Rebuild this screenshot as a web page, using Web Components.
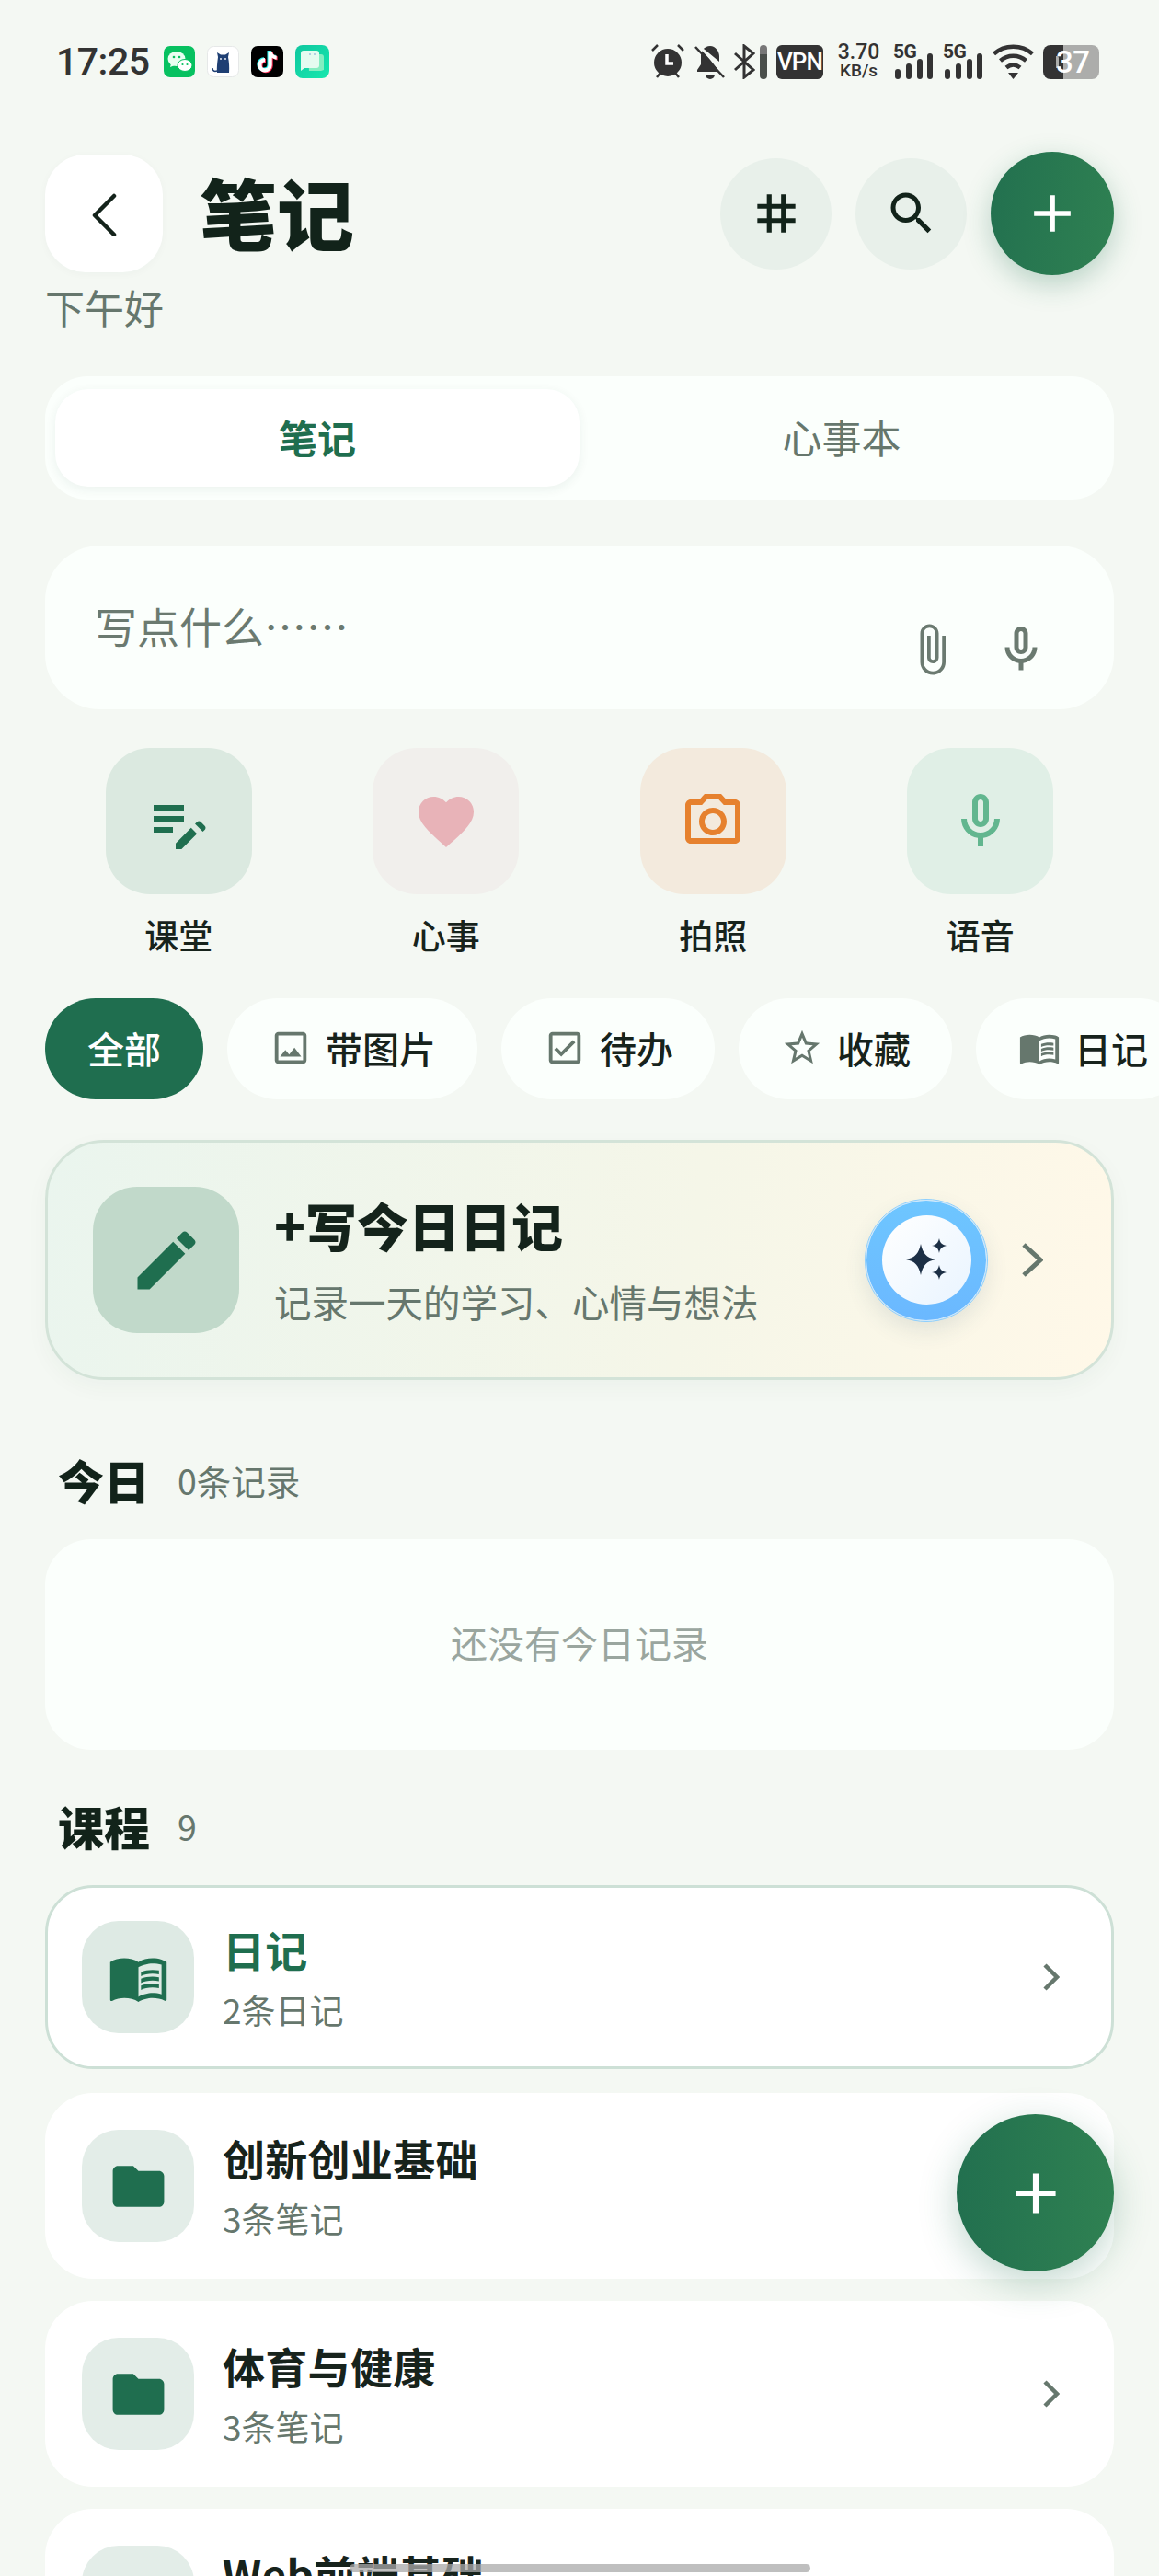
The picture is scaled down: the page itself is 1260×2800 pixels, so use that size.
<!DOCTYPE html>
<html lang="zh">
<head>
<meta charset="utf-8">
<title>笔记</title>
<style>
html, body { margin: 0; height: 2800px; overflow: hidden; background: #f4f8f3; }
body { font-family: "Noto Sans CJK SC", "Noto Sans", sans-serif; color: #14231b; }
</style>
</head>
<body>
<notes-page>
    <status-bar></status-bar>
    <page-header></page-header>
    <seg-tabs></seg-tabs>
    <compose-box></compose-box>
    <quick-grid>
        <quick-action icon="editNote" bg="#dbe9e0" color="#1f6e4f">课堂</quick-action>
        <quick-action icon="heart" bg="#f1efec" color="#e8b3b8">心事</quick-action>
        <quick-action icon="camera" bg="#f3eadd" color="#e6812e">拍照</quick-action>
        <quick-action icon="mic" bg="#e0efe6" color="#62b68f">语音</quick-action>
    </quick-grid>
    <filter-row>
        <filter-chip active>全部</filter-chip>
        <filter-chip icon="image">带图片</filter-chip>
        <filter-chip icon="checkBox">待办</filter-chip>
        <filter-chip icon="star">收藏</filter-chip>
        <filter-chip icon="book">日记</filter-chip>
    </filter-row>
    <diary-banner></diary-banner>
    <section-head style="margin-top:81px" note="0条记录">今日</section-head>
    <empty-card>还没有今日记录</empty-card>
    <section-head style="margin-top:55px" note="9">课程</section-head>
    <course-list>
        <course-row icon="book" selected sub="2条日记">日记</course-row>
        <course-row icon="folder" sub="3条笔记">创新创业基础</course-row>
        <course-row icon="folder" sub="3条笔记">体育与健康</course-row>
        <course-row icon="folder" sub="3条笔记">Web前端基础</course-row>
    </course-list>
    <fab-button></fab-button>
    <home-bar></home-bar>
</notes-page>

<script>
// material style paths, all on a 24 box
const ICONS = {
    editNote: "M3,10h11v2H3V10z M3,8h11V6H3V8z M3,16h7v-2H3V16z M18.01,12.87l0.71-0.71c0.39-0.39,1.02-0.39,1.41,0l1.41,1.41c0.39,0.39,0.39,1.02,0,1.41l-0.71,0.71L18.01,12.87z M16.59,14.29L11,19.88V22h2.12l5.59-5.59L16.59,14.29z",
    heart: "M12 21.35l-1.45-1.32C5.4 15.36 2 12.28 2 8.5 2 5.42 4.42 3 7.5 3c1.74 0 3.41.81 4.5 2.09C13.09 3.81 14.76 3 16.5 3 19.58 3 22 5.42 22 8.5c0 3.78-3.4 6.86-8.55 11.54L12 21.35z",
    camera: "M14.12 4l1.83 2H20v12H4V6h4.05l1.83-2h4.24M15 2H9L7.17 4H4c-1.1 0-2 .9-2 2v12c0 1.1.9 2 2 2h16c1.1 0 2-.9 2-2V6c0-1.1-.9-2-2-2h-3.17L15 2zm-3 7c1.65 0 3 1.35 3 3s-1.35 3-3 3-3-1.35-3-3 1.35-3 3-3m0-2c-2.76 0-5 2.24-5 5s2.24 5 5 5 5-2.24 5-5-2.24-5-5-5z",
    mic: "M12 14c1.66 0 3-1.34 3-3V5c0-1.66-1.34-3-3-3S9 3.34 9 5v6c0 1.66 1.34 3 3 3zm-1-9c0-.55.45-1 1-1s1 .45 1 1v6c0 .55-.45 1-1 1s-1-.45-1-1V5zm6 6c0 2.76-2.24 5-5 5s-5-2.24-5-5H5c0 3.53 2.61 6.43 6 6.92V21h2v-3.08c3.39-.49 6-3.39 6-6.92h-2z",
    clip: "M16.5 6v11.5c0 2.21-1.79 4-4 4s-4-1.79-4-4V5c0-1.38 1.12-2.5 2.5-2.5s2.5 1.12 2.5 2.5v10.5c0 .55-.45 1-1 1s-1-.45-1-1V6H10v9.5c0 1.38 1.12 2.5 2.5 2.5s2.5-1.12 2.5-2.5V5c0-2.21-1.79-4-4-4S7 2.79 7 5v12.5c0 3.04 2.46 5.5 5.5 5.5s5.5-2.46 5.5-5.5V6h-1.5z",
    tag: "M20 10V8h-4V4h-2v4h-4V4H8v4H4v2h4v4H4v2h4v4h2v-4h4v4h2v-4h4v-2h-4v-4h4zm-6 4h-4v-4h4v4z",
    search: "M15.5 14h-.79l-.28-.27C15.41 12.59 16 11.11 16 9.5 16 5.91 13.09 3 9.5 3S3 5.91 3 9.5 5.91 16 9.5 16c1.61 0 3.09-.59 4.23-1.57l.27.28v.79l5 4.99L20.49 19l-4.99-5zm-6 0C7.01 14 5 11.99 5 9.5S7.01 5 9.5 5 14 7.01 14 9.5 11.99 14 9.5 14z",
    add: "M19 13h-6v6h-2v-6H5v-2h6V5h2v6h6v2z",
    image: "M19 5v14H5V5h14m0-2H5c-1.1 0-2 .9-2 2v14c0 1.1.9 2 2 2h14c1.1 0 2-.9 2-2V5c0-1.1-.9-2-2-2zm-4.86 8.86l-3 3.87L9 13.14 6 17h12l-3.86-5.14z",
    checkBox: "M19 3H5c-1.1 0-2 .9-2 2v14c0 1.1.9 2 2 2h14c1.1 0 2-.9 2-2V5c0-1.1-.9-2-2-2zm0 16H5V5h14v14zM17.99 9l-1.41-1.42-6.59 6.59-2.58-2.57-1.42 1.41 4 3.99z",
    star: "M22 9.24l-7.19-.62L12 2 9.19 8.63 2 9.24l5.46 4.73L5.82 21 12 17.27 18.18 21l-1.63-7.03L22 9.24zM12 15.4l-3.76 2.27 1-4.28-3.32-2.88 4.38-.38L12 6.1l1.71 4.04 4.38.38-3.32 2.88 1 4.28L12 15.4z",
    book: "M21,5c-1.11-0.35-2.33-0.5-3.5-0.5c-1.95,0-4.05,0.4-5.5,1.5c-1.45-1.1-3.55-1.5-5.5-1.5S2.45,4.9,1,6v14.65c0,0.25,0.25,0.5,0.5,0.5c0.1,0,0.15-0.05,0.25-0.05C3.1,20.45,5.05,20,6.5,20c1.95,0,4.05,0.4,5.5,1.5c1.35-0.85,3.8-1.5,5.5-1.5c1.65,0,3.35,0.3,4.75,1.05c0.1,0.05,0.15,0.05,0.25,0.05c0.25,0,0.5-0.25,0.5-0.5V6C22.4,5.55,21.75,5.25,21,5z M21,18.5c-1.1-0.35-2.3-0.5-3.5-0.5c-1.7,0-4.15,0.65-5.5,1.5V8c1.35-0.85,3.8-1.5,5.5-1.5c1.2,0,2.4,0.15,3.5,0.5V18.5z M17.5,10.5c0.88,0,1.73,0.09,2.5,0.26V9.24C19.21,9.09,18.36,9,17.5,9c-1.7,0-3.24,0.29-4.5,0.83v1.66C14.13,10.85,15.7,10.5,17.5,10.5z M13,12.49v1.66c1.13-0.64,2.7-0.99,4.5-0.99c0.88,0,1.73,0.09,2.5,0.26V11.9c-0.79-0.15-1.64-0.24-2.5-0.24C15.8,11.66,14.26,11.96,13,12.49z M17.5,14.33c-1.7,0-3.24,0.29-4.5,0.83v1.66c1.13-0.64,2.7-0.99,4.5-0.99c0.88,0,1.73,0.09,2.5,0.26v-1.52C19.21,14.41,18.36,14.33,17.5,14.33z",
    folder: "M10 4H4c-1.1 0-1.99.9-1.99 2L2 18c0 1.1.9 2 2 2h16c1.1 0 2-.9 2-2V8c0-1.1-.9-2-2-2h-8l-2-2z",
    edit: "M3 17.25V21h3.75L17.81 9.94l-3.75-3.75L3 17.25zM20.71 7.04c.39-.39.39-1.02 0-1.41l-2.34-2.34c-.39-.39-1.02-.39-1.41 0l-1.83 1.83 3.75 3.75 1.83-1.83z"
};

function icon(name, size, color) {
    return `<svg width="${size}" height="${size}" viewBox="0 0 24 24" fill="${color}" style="display:block;flex:none"><path d="${ICONS[name]}"/></svg>`;
}

function chevron(width, height, color, stroke) {
    return `<svg width="${width}" height="${height}" viewBox="0 0 ${width} ${height}" fill="none" style="display:block;flex:none"><path d="M2 2L${width - 3} ${height / 2}L2 ${height - 2}" stroke="${color}" stroke-width="${stroke}"/></svg>`;
}

class BaseElement extends HTMLElement {
    connectedCallback() {
        if (this.shadowRoot) return;
        this.attachShadow({ mode: "open" });
        this.shadowRoot.innerHTML = this.render();
    }
}

class NotesPage extends BaseElement {
    render() {
        return `<style>
            :host { display: block; position: relative; width: 1260px; height: 2800px; overflow: hidden; box-sizing: border-box; padding: 0 49px; }
        </style><slot></slot>`;
    }
}

class StatusBar extends BaseElement {
    signal() {
        return `<span class="sig"><b>5G</b><svg width="44" height="28" viewBox="0 0 44 28"><rect x="2" y="17" width="6" height="11" rx="3" fill="#333"/><rect x="14" y="11" width="6" height="17" rx="3" fill="#333"/><rect x="26" y="6" width="6" height="22" rx="3" fill="#333"/><rect x="37" y="0" width="6" height="28" rx="3" fill="#333"/></svg></span>`;
    }
    render() {
        return `<style>
            :host { display: flex; justify-content: space-between; align-items: flex-start; box-sizing: border-box; height: 165px; margin: 0 -49px; padding: 48px 62px 0 61px; font-family: Roboto, sans-serif; color: #333; }
            .left, .right { display: flex; align-items: center; height: 38px; }
            .time { font-size: 41px; font-weight: 500; line-height: 38px; width: 117px; letter-spacing: -.5px; }
            .left svg { margin-right: 13px; display: block; }
            .right { gap: 0; }
            .vpn { box-sizing: border-box; width: 51px; height: 37px; background: #333; color: #fff; border-radius: 6px; font-size: 26px; font-weight: 500; line-height: 37px; text-align: center; letter-spacing: -1px; margin: 0 15px 0 10px; }
            .speed { width: 47px; text-align: center; font-weight: 500; margin-right: 14px; display: flex; flex-direction: column; align-items: center; }
            .speed b { font-size: 23px; line-height: 20px; font-weight: 500; }
            .speed i { font-style: normal; font-size: 19px; line-height: 20px; }
            .sig { position: relative; display: block; width: 44px; height: 38px; margin-right: 10px; }
            .sig b { position: absolute; left: 0; top: -2px; font-size: 21px; line-height: 20px; font-weight: 700; letter-spacing: -.5px; }
            .sig svg { position: absolute; left: 0; bottom: 0; display: block; }
            .pill { width: 8px; height: 37px; border-radius: 4px; background: linear-gradient(#777 0 26%, #4a4f4b 26%); margin-left: 5px; }
            .batt { position: relative; display: block; width: 64px; height: 37px; margin-left: 10px; }
            .batt .track { position: absolute; left: 0; top: 0; width: 61px; height: 37px; border-radius: 8px; background: linear-gradient(90deg, #333 0 36%, #acadab 36%); }
            .batt .nub { position: absolute; right: 0; top: 12px; width: 3px; height: 13px; border-radius: 0 2px 2px 0; background: #acadab; }
            .batt span { position: absolute; left: 14px; top: 0; width: 34px; font-size: 33px; line-height: 37px; font-weight: 500; color: #fff; text-align: center; letter-spacing: -.5px; }
        </style>
        <div class="left">
            <span class="time">17:25</span>
            <svg width="34" height="34" viewBox="0 0 34 34"><rect width="34" height="34" rx="7" fill="#07c160"/><ellipse cx="14" cy="14" rx="9.5" ry="8" fill="#e8fff1"/><path d="M8 19l-1 4 5-2z" fill="#e8fff1"/><ellipse cx="23" cy="21" rx="8" ry="6.5" fill="#fff" stroke="#07c160" stroke-width="1"/><circle cx="11" cy="12" r="1.3" fill="#07c160"/><circle cx="17" cy="12" r="1.3" fill="#07c160"/><circle cx="20.5" cy="20" r="1.1" fill="#07c160"/><circle cx="25.5" cy="20" r="1.1" fill="#07c160"/></svg>
            <svg width="35" height="34" viewBox="0 0 35 34"><rect x=".5" y=".5" width="34" height="33" rx="7" fill="#fff" stroke="#e6e8e8"/><path d="M11 29c-.5-6 .5-13 1-17l-1-5 4 2.500h5l4-2.500-1 5c1 5 1.500 11 1 17z" fill="#1f3f73"/><path d="M11 27c-3 1-5 0-5-3" stroke="#1f3f73" stroke-width="1.500" fill="none"/><circle cx="15" cy="14" r=".9" fill="#fff"/><circle cx="20" cy="14" r=".9" fill="#fff"/></svg>
            <svg width="35" height="34" viewBox="0 0 35 34"><rect width="35" height="34" rx="7" fill="#000"/><path d="M19 6v15a3.500 3.500 0 1 1-3.500-3.500v-4.200a7.700 7.700 0 1 0 7.700 7.700v-8c1.700 1.200 3.300 1.800 5 1.800v-4c-2.800 0-4.800-2-5-4.800z" fill="#25f4ee" transform="translate(-1.500 -1)"/><path d="M19 6v15a3.500 3.500 0 1 1-3.500-3.500v-4.200a7.700 7.700 0 1 0 7.700 7.700v-8c1.700 1.200 3.300 1.800 5 1.800v-4c-2.800 0-4.800-2-5-4.800z" fill="#fe2c55" transform="translate(.5 .5)"/><path d="M19 6v15a3.500 3.500 0 1 1-3.500-3.500v-4.200a7.700 7.700 0 1 0 7.700 7.700v-8c1.700 1.200 3.300 1.800 5 1.800v-4c-2.800 0-4.800-2-5-4.800z" fill="#fff" transform="translate(-.5 -.3)"/></svg>
            <svg width="37" height="36" viewBox="0 0 37 36" style="margin-right:0"><defs><linearGradient id="cg" x1="0" y1="0" x2="1" y2="1"><stop offset="0" stop-color="#0fc79f"/><stop offset="1" stop-color="#17e8ae"/></linearGradient></defs><rect width="37" height="36" rx="8" fill="url(#cg)"/><path d="M14 10h14a3 3 0 0 1 3 3v14l-3 1H15z" fill="#84eec1"/><path d="M10 6h13a3 3 0 0 1 3 3v13a3 3 0 0 1-3 3H10l-4 3V9a3 3 0 0 1 3-3z" fill="#e4fbf0"/><circle cx="16" cy="10" r=".9" fill="#9bd"/><circle cx="21" cy="10" r=".9" fill="#9bd"/></svg>
        </div>
        <div class="right">
            <svg width="36" height="38" viewBox="0 0 36 38" style="margin-right:11px"><path d="M7 1L1 7M29 1l6 6M6 36l4-5M30 36l-4-5" stroke="#333" stroke-width="2.500"/><circle cx="18" cy="20" r="15" fill="#333"/><path d="M17 11v10h7" stroke="#fff" stroke-width="3.500" fill="none"/></svg>
            <svg width="34" height="38" viewBox="0 0 34 38" style="margin-right:9px"><path d="M17 2c-6 0-10 5-10 11v9l-4 6v2h24L9 6c2-2.500 5-4 8-4zM27 19v-6c0-5-4-11-10-11-3 0-5 1-7 3z" fill="#333"/><path d="M12 33h10a5 5 0 0 1-10 0z" fill="#333"/><path d="M1 3l31 33" stroke="#333" stroke-width="2.500"/><path d="M4 1l31 33" stroke="#f4f8f3" stroke-width="2.500"/></svg>
            <svg width="23" height="38" viewBox="0 0 23 38"><path d="M1 10l20 18-10 8V2l10 8L1 28" stroke="#333" stroke-width="3" fill="none"/></svg>
            <span class="pill"></span>
            <span class="vpn">VPN</span>
            <span class="speed"><b>3.70</b><i>KB/s</i></span>
            ${this.signal()}
            ${this.signal()}
            <svg width="45" height="38" viewBox="0 0 45 38"><g fill="none" stroke="#333" stroke-width="4.500"><path d="M1.500 10.500C13 0 32 0 43.500 10.500"/><path d="M8.500 18c8-7 20-7 28 0"/><path d="M15 25.500c4.500-3.800 10.500-3.800 15 0"/></g><path d="M17 31h11l-5.500 7z" fill="#333"/></svg>
            <span class="batt"><span class="track"></span><span class="nub"></span><span>37</span></span>
        </div>`;
    }
}

class PageHeader extends BaseElement {
    render() {
        return `<style>
            :host { display: block; }
            .row { display: flex; align-items: center; height: 134px; }
            .back { width: 128px; height: 128px; border-radius: 44px; background: #fff; display: flex; align-items: center; justify-content: center; box-shadow: 0 2px 10px rgba(30,70,50,.03); margin-right: 40px; }
            h1 { margin: 0; padding-bottom: 4px; font-size: 84px; line-height: 130px; font-weight: 900; color: #12231a; flex: 1; }
            .round { width: 121px; height: 121px; border-radius: 50%; background: #e8f0ea; display: flex; align-items: center; justify-content: center; margin-left: 26px; }
            .add { width: 134px; height: 134px; margin-left: 26px; border-radius: 50%; background: linear-gradient(100deg, #22704f, #2f8152); display: flex; align-items: center; justify-content: center; box-shadow: 0 10px 30px rgba(31,110,79,.28); }
            p { margin: 9px 0 0; font-size: 43px; line-height: 50px; color: #66776d; }
        </style>
        <div class="row">
            <div class="back"><svg width="29" height="48" viewBox="0 0 29 48" fill="none"><path d="M25 3L4 24l21 21" stroke="#14231b" stroke-width="4.500" stroke-linecap="round" stroke-linejoin="round" transform="translate(0 2)"/></svg></div>
            <h1>笔记</h1>
            <div class="round">${icon("tag", 62, "#12231a")}</div>
            <div class="round">${icon("search", 60, "#12231a")}</div>
            <div class="add">${icon("add", 68, "#fff")}</div>
        </div>
        <p>下午好</p>`;
    }
}

class SegTabs extends BaseElement {
    render() {
        return `<style>
            :host { display: flex; box-sizing: border-box; height: 134px; margin-top: 51px; padding: 14px 11px; background: #fbfffc; border-radius: 46px; }
            div { flex: 1; display: flex; align-items: center; justify-content: center; box-sizing: border-box; padding-bottom: 4px; font-size: 42px; color: #66776d; border-radius: 36px; }
            .off { font-size: 43px; }
            .on { background: #fff; color: #1f6e4f; font-weight: 700; box-shadow: 0 3px 12px rgba(30,70,50,.07); }
        </style>
        <div class="on">笔记</div><div class="off">心事本</div>`;
    }
}

class ComposeBox extends BaseElement {
    render() {
        return `<style>
            :host { display: block; position: relative; box-sizing: border-box; height: 178px; margin-top: 50px; padding: 57px 54px 0; background: #fbfffc; border-radius: 60px; font-size: 46px; line-height: 58px; color: #6b7a70; }
            .tools { position: absolute; right: 71px; top: 83px; display: flex; gap: 37px; }
        </style>
        写点什么……
        <div class="tools">${icon("clip", 60, "#6b7a70")}${icon("mic", 60, "#6b7a70")}</div>`;
    }
}

class QuickGrid extends BaseElement {
    render() {
        return `<style>
            :host { display: grid; grid-template-columns: repeat(4, 1fr); margin-top: 42px; }
        </style><slot></slot>`;
    }
}

class QuickAction extends BaseElement {
    render() {
        const bg = this.getAttribute("bg");
        const color = this.getAttribute("color");
        return `<style>
            :host { display: flex; flex-direction: column; align-items: center; gap: 19px; font-size: 37px; line-height: 50px; font-weight: 500; color: #17231c; }
            .box { width: 159px; height: 159px; border-radius: 48px; background: ${bg}; display: flex; align-items: center; justify-content: center; }
        </style>
        <div class="box">${icon(this.getAttribute("icon"), 72, color)}</div>
        <slot></slot>`;
    }
}

class FilterRow extends BaseElement {
    render() {
        return `<style>
            :host { display: flex; gap: 26px; margin: 44px -49px 0 0; overflow: hidden; }
        </style><slot></slot>`;
    }
}

class FilterChip extends BaseElement {
    render() {
        const active = this.hasAttribute("active");
        const name = this.getAttribute("icon");
        return `<style>
            :host { display: flex; flex: none; align-items: center; gap: 15px; box-sizing: border-box; height: 110px; padding: 0 ${name ? 45 : 46}px 2px 46px; border-radius: 55px; font-size: 40px; font-weight: 500; background: ${active ? "#1f6e4f" : "#fbfffc"}; color: ${active ? "#fff" : "#17231c"}; }
        </style>
        ${name ? icon(name, 46, "#66776d") : ""}<slot></slot>`;
    }
}

class DiaryBanner extends BaseElement {
    render() {
        return `<style>
            :host { display: flex; align-items: center; box-sizing: border-box; height: 261px; margin-top: 44px; padding: 0 74px 0 49px; border: 3px solid #d3e3d8; border-radius: 64px; background: linear-gradient(100deg, #eaf5ee, #f5f6e8 60%, #fff8e8); box-shadow: 0 8px 24px rgba(30,70,50,.04); }
            .box { width: 159px; height: 159px; border-radius: 48px; background: #c1d9ca; display: flex; align-items: center; justify-content: center; margin-right: 38px; flex: none; }
            .text { flex: 1; padding-bottom: 1px; }
            h2 { margin: 0 0 26px; font-size: 56px; line-height: 66px; font-weight: 900; color: #14231b; }
            p { margin: 0; font-size: 40.5px; line-height: 50px; color: #66776d; }
            .ai { width: 132px; height: 132px; box-sizing: border-box; border-radius: 50%; background: linear-gradient(#6ec6ff, #6bb8ff); border: 1px solid #cfe9ff; outline: 1px solid #8ccfff; outline-offset: 0; display: flex; align-items: center; justify-content: center; margin-right: 38px; box-shadow: 0 10px 24px rgba(40,80,110,.12); flex: none; }
            .core { width: 97px; height: 97px; border-radius: 50%; background: linear-gradient(135deg, #fff, #e9f4ff); display: block; }
        </style>
        <div class="box">${icon("edit", 84, "#1f6e4f")}</div>
        <div class="text"><h2>+写今日日记</h2><p>记录一天的学习、心情与想法</p></div>
        <div class="ai"><svg class="core" viewBox="0 0 97 97" fill="#1c2f45"><path d="M42 31c2 10 6 15 16 17-10 2-14 7-16 17-2-10-6-15-16-17 10-2 14-7 16-17z"/><path d="M62 25c1 5 3 7 8 8-5 1-7 3-8 8-1-5-3-7-8-8 5-1 7-3 8-8z"/><path d="M62 54c1 5 3 7 8 8-5 1-7 3-8 8-1-5-3-7-8-8 5-1 7-3 8-8z"/></svg></div>
        ${chevron(23, 37, "#66776d", 5)}`;
    }
}

class SectionHead extends BaseElement {
    render() {
        return `<style>
            :host { display: flex; align-items: center; box-sizing: border-box; height: 60px; padding: 0 0 5px 14px; }
            h3 { margin: 0; font-size: 50px; line-height: 55px; font-weight: 900; color: #12231a; width: 130px; flex: none; }
            span { font-size: 37.5px; color: #66776d; }
        </style>
        <h3><slot></slot></h3><span>${this.getAttribute("note")}</span>`;
    }
}

class EmptyCard extends BaseElement {
    render() {
        return `<style>
            :host { display: flex; align-items: center; justify-content: center; box-sizing: border-box; height: 229px; margin-top: 32px; padding-bottom: 6px; background: #fbfffc; border-radius: 50px; font-size: 40px; color: #9aa69f; }
        </style><slot></slot>`;
    }
}

class CourseList extends BaseElement {
    render() {
        return `<style>
            :host { display: flex; flex-direction: column; gap: 24px; margin-top: 32px; }
        </style><slot></slot>`;
    }
}

class CourseRow extends BaseElement {
    render() {
        const selected = this.hasAttribute("selected");
        return `<style>
            :host { display: flex; flex: none; align-items: center; box-sizing: border-box; height: ${selected ? 200 : 202}px; ${selected ? "margin-bottom: 2px;" : ""} padding-left: ${selected ? 37 : 40}px; padding-right: ${selected ? 56 : 59}px; background: #fff; border-radius: 52px; border: ${selected ? "3px solid #cde0d6" : "0"}; }
            .box { width: 122px; height: 122px; border-radius: 40px; background: ${selected ? "#deeae4" : "#e3ede8"}; display: flex; align-items: center; justify-content: center; margin-right: 31px; flex: none; }
            .text { flex: 1; padding-bottom: 3px; }
            h4 { margin: 0 0 16px; font-size: 46px; letter-spacing: .3px; line-height: 56px; font-weight: 700; color: ${selected ? "#1f6e4f" : "#17231c"}; }
            p { margin: 0; font-size: 37px; line-height: 44px; color: #66776d; }
        </style>
        <div class="box">${icon(this.getAttribute("icon"), 67, "#1f6e4f")}</div>
        <div class="text"><h4><slot></slot></h4><p>${this.getAttribute("sub")}</p></div>
        ${chevron(18, 30, "#66776d", 4.5)}`;
    }
}

// floats over the list, that is why it is absolute
class FabButton extends BaseElement {
    render() {
        return `<style>
            :host { position: absolute; right: 49px; top: 2298px; width: 171px; height: 171px; border-radius: 50%; background: linear-gradient(90deg, #22704f, #2f8152); display: flex; align-items: center; justify-content: center; box-shadow: 0 12px 40px rgba(31,110,79,.28); }
        </style>${icon("add", 74, "#fff")}`;
    }
}

class HomeBar extends BaseElement {
    render() {
        return `<style>
            :host { position: absolute; left: 380px; bottom: 4px; width: 501px; height: 9px; border-radius: 5px; background: rgba(170,170,170,.75); }
        </style>`;
    }
}

customElements.define("notes-page", NotesPage);
customElements.define("status-bar", StatusBar);
customElements.define("page-header", PageHeader);
customElements.define("seg-tabs", SegTabs);
customElements.define("compose-box", ComposeBox);
customElements.define("quick-grid", QuickGrid);
customElements.define("quick-action", QuickAction);
customElements.define("filter-row", FilterRow);
customElements.define("filter-chip", FilterChip);
customElements.define("diary-banner", DiaryBanner);
customElements.define("section-head", SectionHead);
customElements.define("empty-card", EmptyCard);
customElements.define("course-list", CourseList);
customElements.define("course-row", CourseRow);
customElements.define("fab-button", FabButton);
customElements.define("home-bar", HomeBar);
</script>
</body>
</html>
